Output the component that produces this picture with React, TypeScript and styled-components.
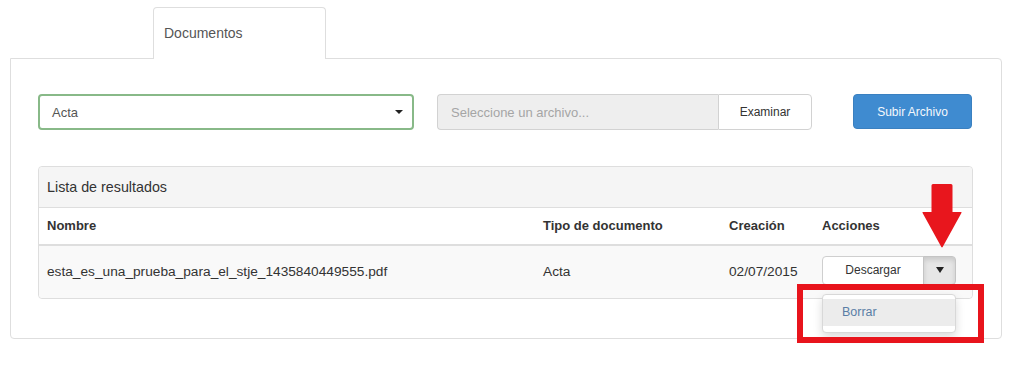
import React from "react";
import styled, { createGlobalStyle } from "styled-components";

const Global = createGlobalStyle`
  html, body { margin: 0; padding: 0; background: #fff; }
  body { font-family: "Liberation Sans", Arial, sans-serif; color: #333; }
  * { box-sizing: border-box; }
`;

const Page = styled.div`
  position: relative;
  width: 1024px;
  height: 377px;
  padding: 7px 0 0 10px;
`;

const TabStrip = styled.div`
  display: flex;
  padding-left: 143px;
  position: relative;
  z-index: 1;
  margin-bottom: -1px;
`;

const Tab = styled.div`
  width: 173px;
  height: 52px;
  border: 1px solid #dedede;
  border-bottom: none;
  border-radius: 4px 4px 0 0;
  background: #fff;
  display: flex;
  align-items: center;
  padding: 0 0 2px 10px;
  font-size: 14px;
  color: #555;
`;

const Panel = styled.div`
  width: 992px;
  border: 1px solid #dedede;
  border-radius: 0 4px 4px 4px;
  padding: 35px 28px 39px 27px;
  display: flex;
  flex-direction: column;
  gap: 36px;
`;

const FormRow = styled.div`
  display: flex;
  align-items: flex-start;
  height: 36px;
`;

const Select = styled.div`
  width: 376px;
  height: 36px;
  border: 2px solid #88b988;
  border-radius: 4px;
  display: flex;
  align-items: center;
  justify-content: space-between;
  padding: 0 9px 0 12px;
  font-size: 13px;
  color: #555;
`;

const Caret = styled.span<{ $w: number; $h: number }>`
  width: 0;
  height: 0;
  border-left: ${(p) => p.$w / 2}px solid transparent;
  border-right: ${(p) => p.$w / 2}px solid transparent;
  border-top: ${(p) => p.$h}px solid #222;
`;

const FileGroup = styled.div`
  display: flex;
  margin-left: 23px;
  height: 36px;
`;

const FileInput = styled.div`
  width: 281px;
  height: 100%;
  background: #eee;
  border: 1px solid #d2d2d2;
  border-right: none;
  border-radius: 4px 0 0 4px;
  display: flex;
  align-items: center;
  padding-left: 13px;
  font-size: 13px;
  color: #a5a5a5;
`;

const BrowseButton = styled.button`
  width: 94px;
  height: 100%;
  background: #fff;
  border: 1px solid #d2d2d2;
  border-radius: 0 4px 4px 0;
  font-family: inherit;
  font-size: 12px;
  color: #333;
  padding: 0;
`;

const PrimaryButton = styled.button`
  margin-left: 41px;
  width: 119px;
  height: 35px;
  background: #3f8bd0;
  border: 1px solid #3a80c0;
  border-radius: 4px;
  color: #f4f8fc;
  font-family: inherit;
  font-size: 12px;
  padding: 0;
`;

const Results = styled.div`
  border: 1px solid #dedede;
  border-radius: 4px;
  overflow: visible;
`;

const ResultsHeading = styled.div`
  height: 41px;
  background: #f5f5f5;
  border-bottom: 1px solid #dedede;
  border-radius: 4px 4px 0 0;
  display: flex;
  align-items: center;
  padding: 0 0 1px 8px;
  font-size: 14.3px;
  color: #333;
`;

const TableRow = styled.div<{ $head?: boolean }>`
  display: grid;
  grid-template-columns: 496px 186px 93px 1fr;
  align-items: center;
  height: ${(p) => (p.$head ? "38px" : "52px")};
  background: ${(p) => (p.$head ? "#fff" : "#f9f9f9")};
  border-bottom: ${(p) => (p.$head ? "2px solid #dedede" : "none")};
  border-radius: ${(p) => (p.$head ? "0" : "0 0 4px 4px")};
  font-size: ${(p) => (p.$head ? "13px" : "13.7px")};
  font-weight: ${(p) => (p.$head ? "bold" : "normal")};
  color: #333;
  padding-bottom: 2px;
`;

const Cell = styled.div`
  padding-left: 8px;
  white-space: nowrap;
`;

const ActionGroup = styled.div`
  position: relative;
  display: inline-flex;
  height: 29px;
  margin-top: -2px;
`;

const DownloadButton = styled.button`
  width: 102px;
  height: 100%;
  background: #fff;
  border: 1px solid #cfcfcf;
  border-radius: 4px 0 0 4px;
  font-family: inherit;
  font-size: 12px;
  color: #333;
  padding: 0;
`;

const ToggleButton = styled.button`
  width: 33px;
  height: 100%;
  margin-left: -1px;
  background: #e6e6e6;
  border: 1px solid #c4c4c4;
  border-radius: 0 4px 4px 0;
  box-shadow: inset 0 3px 5px rgba(0, 0, 0, 0.125);
  display: flex;
  align-items: center;
  justify-content: center;
  padding: 0;
`;

const Menu = styled.div`
  position: absolute;
  top: calc(100% + 9px);
  left: 0;
  width: 134px;
  padding: 4px 0 6px;
  background: #fff;
  border: 1px solid #d8d8d8;
  border-radius: 4px;
  box-shadow: 0 4px 10px rgba(0, 0, 0, 0.15);
  z-index: 2;
`;

const MenuItem = styled.div`
  height: 27px;
  background: #ececec;
  display: flex;
  align-items: center;
  padding-left: 19px;
  font-size: 12.5px;
  font-weight: normal;
  color: #5a7ea6;
`;

const Highlight = styled.div`
  position: absolute;
  left: 797px;
  top: 284px;
  width: 187px;
  height: 59px;
  border: 6px solid #e8141c;
  z-index: 3;
  pointer-events: none;
`;

const Arrow = styled.svg`
  position: absolute;
  left: 922px;
  top: 184px;
  z-index: 3;
`;

export default function App() {
  return (
    <>
      <Global />
      <Page>
        <TabStrip>
          <Tab>Documentos</Tab>
        </TabStrip>
        <Panel>
          <FormRow>
            <Select>
              <span>Acta</span>
              <Caret $w={9} $h={4} />
            </Select>
            <FileGroup>
              <FileInput>Seleccione un archivo...</FileInput>
              <BrowseButton>Examinar</BrowseButton>
            </FileGroup>
            <PrimaryButton>Subir Archivo</PrimaryButton>
          </FormRow>
          <Results>
            <ResultsHeading>Lista de resultados</ResultsHeading>
            <TableRow $head>
              <Cell>Nombre</Cell>
              <Cell>Tipo de documento</Cell>
              <Cell>Creación</Cell>
              <Cell>Acciones</Cell>
            </TableRow>
            <TableRow>
              <Cell>esta_es_una_prueba_para_el_stje_1435840449555.pdf</Cell>
              <Cell>Acta</Cell>
              <Cell>02/07/2015</Cell>
              <Cell>
                <ActionGroup>
                  <DownloadButton>Descargar</DownloadButton>
                  <ToggleButton>
                    <Caret $w={8} $h={6} />
                  </ToggleButton>
                  <Menu>
                    <MenuItem>Borrar</MenuItem>
                  </Menu>
                </ActionGroup>
              </Cell>
            </TableRow>
          </Results>
        </Panel>
        <Highlight />
        <Arrow width="40" height="64" viewBox="0 0 40 64">
          <path
            d="M9.5 1.5 Q9.5 0 11 0 L29 0 Q30.5 0 30.5 1.5 L30.5 28 L39 28 Q40 28 39.4 29 L20.8 62.8 Q20 64 19.2 62.8 L0.6 29 Q0 28 1 28 L9.5 28 Z"
            fill="#e8161d"
          />
        </Arrow>
      </Page>
    </>
  );
}
